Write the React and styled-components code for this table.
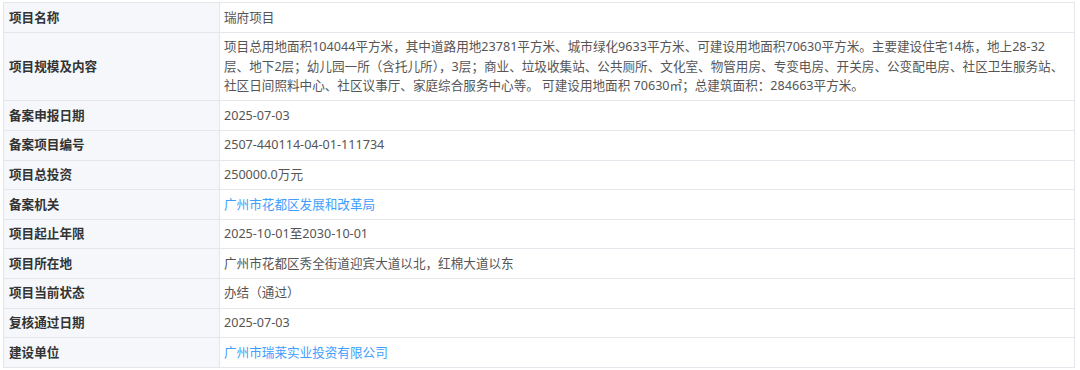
import React from 'react';
import styled, { createGlobalStyle } from 'styled-components';

const GlobalStyle = createGlobalStyle`
  body {
    margin: 0;
    background: #ffffff;
    font-family: "Noto Sans", "Noto Sans CJK SC", sans-serif;
  }
`;

const rows = [
  { label: '项目名称', value: ['瑞府项目'] },
  {
    label: '项目规模及内容',
    value: [
      '项目总用地面积104044平方米，其中道路用地23781平方米、城市绿化9633平方米、可建设用地面积70630平方米。主要建设住宅14栋，地上28-32',
      '层、地下2层；幼儿园一所（含托儿所），3层；商业、垃圾收集站、公共厕所、文化室、物管用房、专变电房、开关房、公变配电房、社区卫生服务站、',
      '社区日间照料中心、社区议事厅、家庭综合服务中心等。 可建设用地面积 70630㎡；总建筑面积：284663平方米。',
    ],
  },
  { label: '备案申报日期', value: ['2025-07-03'] },
  { label: '备案项目编号', value: ['2507-440114-04-01-111734'] },
  { label: '项目总投资', value: ['250000.0万元'] },
  { label: '备案机关', value: ['广州市花都区发展和改革局'], link: true },
  { label: '项目起止年限', value: ['2025-10-01至2030-10-01'] },
  { label: '项目所在地', value: ['广州市花都区秀全街道迎宾大道以北，红棉大道以东'] },
  { label: '项目当前状态', value: ['办结（通过）'] },
  { label: '复核通过日期', value: ['2025-07-03'] },
  { label: '建设单位', value: ['广州市瑞莱实业投资有限公司'], link: true },
];

const Wrap = styled.div`
  padding: 2px 5px 0 3px;
`;

const Table = styled.table`
  width: 1072px;
  border-collapse: collapse;
  table-layout: fixed;
  font-size: 12.6px;
  line-height: 19.6px;
  border: 1px solid #e3e6eb;
`;

const Label = styled.th`
  width: 216px;
  box-sizing: border-box;
  padding: 4.5px 5px;
  text-align: left;
  font-weight: 700;
  color: #333333;
  background: #f5f7fa;
  border: 1px solid #e3e6eb;
  vertical-align: middle;
`;

const Value = styled.td`
  padding: 4.5px 4px;
  text-align: left;
  color: ${(p) => (p.$link ? '#409eff' : '#555555')};
  border: 1px solid #e3e6eb;
  white-space: nowrap;
  vertical-align: middle;
`;

const Line = styled.div`
  white-space: nowrap;
`;

const App = () => (
  <>
    <GlobalStyle />
    <Wrap>
      <Table>
        <tbody>
          {rows.map((row) => (
            <tr key={row.label}>
              <Label>{row.label}</Label>
              <Value $link={row.link}>
                {row.value.map((line) => (
                  <Line key={line}>{line}</Line>
                ))}
              </Value>
            </tr>
          ))}
        </tbody>
      </Table>
    </Wrap>
  </>
);

export default App;
